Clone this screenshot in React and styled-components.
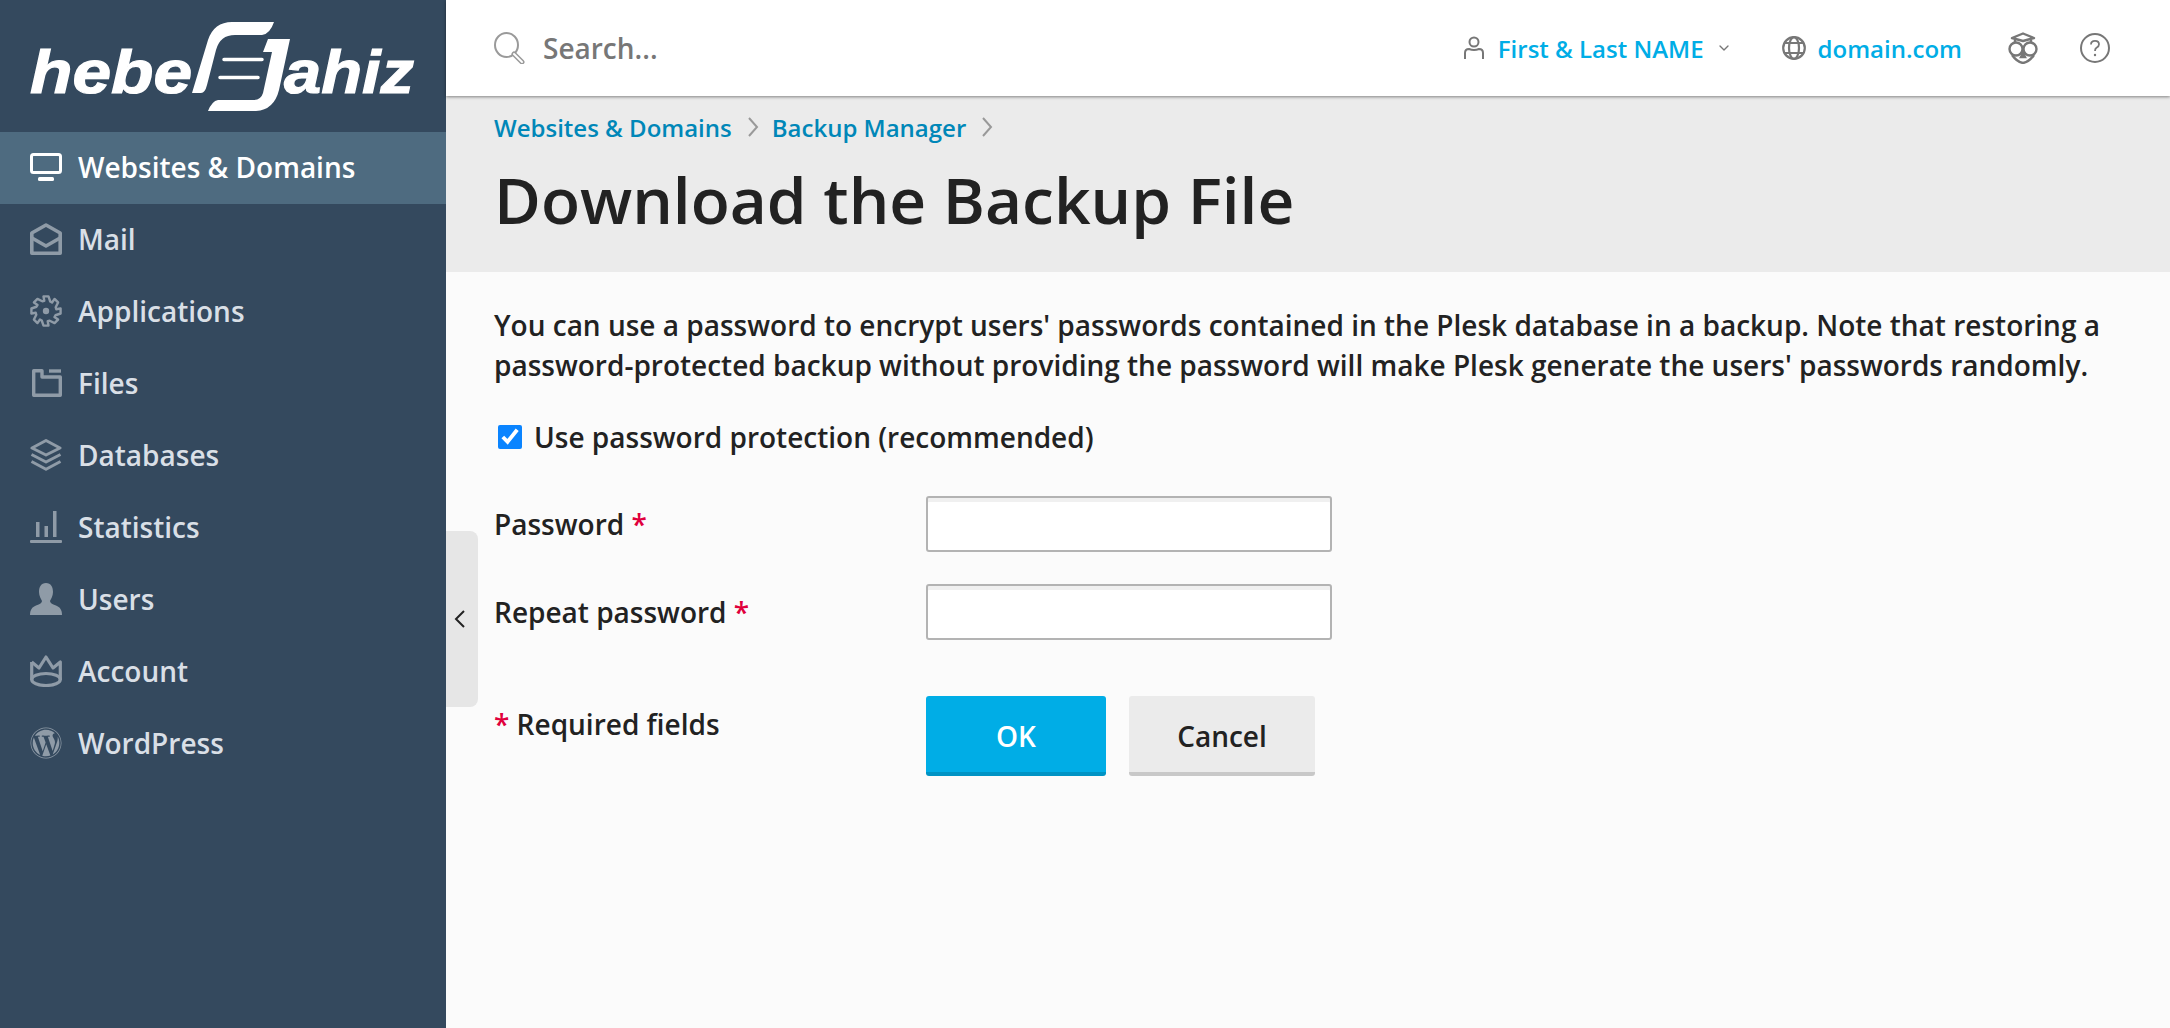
import React from 'react'
import styled, {createGlobalStyle} from 'styled-components'
import {ChevronDown} from 'lucide-react'
import {FaWordpress} from 'react-icons/fa'

const Global = createGlobalStyle`
html, body {margin:0; padding:0; height:100%;}
body {font-family:"Open Sans", "Liberation Sans", sans-serif; font-weight:600; color:#222; background:#fbfbfb;}
#root {height:100%;}
* {box-sizing:border-box;}
`

const Page = styled.div`
display:flex;
height:1028px;
overflow:hidden;
`

const Sidebar = styled.aside`
position:relative;
flex:0 0 446px;
background:#34495e;
`

const LogoBox = styled.div`
height:132px;
svg{display:block;}
`

const NavItem = styled.a`
display:flex;
align-items:center;
gap:16px;
height:72px;
padding:0 0 2px 30px;
font-size:28px;
color:${props => props.$active ? '#fff' : '#d9dfe6'};
background:${props => props.$active ? '#4e6b80' : 'transparent'};
svg{
    flex:0 0 32px;
    width:32px;
    height:32px;
    color:${props => props.$active ? '#fff' : '#8f9ba7'};
}
`

const Collapse = styled.div`
position:absolute;
left:100%;
top:531px;
width:32px;
height:176px;
display:flex;
align-items:center;
padding-left:8px;
background:#e6e6e6;
border-radius:0 8px 8px 0;
`

const Main = styled.main`
flex:1;
min-width:0;
display:flex;
flex-direction:column;
`

const TopBar = styled.header`
position:relative;
flex:0 0 96px;
display:flex;
align-items:center;
justify-content:space-between;
padding:0 60px 0 48px;
background:#fff;
box-shadow:0 1px 3px rgba(0,0,0,.45);
`

const SearchBox = styled.div`
display:flex;
align-items:center;
gap:17px;
font-size:28px;
color:#777;
`

const TopLinks = styled.div`
display:flex;
align-items:center;
`

const TopLink = styled.a`
display:flex;
align-items:center;
gap:${props => props.$gap || 12}px;
margin-right:${props => props.$after || 0}px;
font-size:24px;
color:#00ade6;
svg{flex:none; color:#777;}
`

const Caret = styled(ChevronDown)`
margin-right:50px;
color:#777;
`

const PageHead = styled.section`
flex:0 0 176px;
padding:13px 36px 0 48px;
background:#ebebeb;
`

const Crumbs = styled.nav`
display:flex;
align-items:center;
height:36px;
font-size:24px;
color:#0087b8;
svg{margin:0 13px 0 15px; flex:none;}
`

const Title = styled.h1`
margin:15px 0 0;
font-size:64px;
font-weight:600;
line-height:80px;
color:#222;
`

const Content = styled.section`
flex:1;
padding:33px 48px 0;
background:#fbfbfb;
`

const Intro = styled.p`
margin:0;
font-size:28px;
line-height:40px;
color:#222;
white-space:nowrap;
`

const CheckRow = styled.label`
display:flex;
align-items:center;
height:40px;
margin-top:32px;
font-size:28px;
input{
    width:24px;
    height:24px;
    margin:0 12px 0 4px;
    accent-color:#0a84ff;
}
`

const FormRow = styled.div`
display:grid;
grid-template-columns:432px auto;
align-items:center;
margin-top:${props => props.$top || 32}px;
font-size:28px;
`

const Star = styled.span`
color:#e0003c;
`

const TextBox = styled.input`
display:block;
width:406px;
height:56px;
padding:0 12px;
background:#fff;
border:2px solid #b3b3b3;
border-radius:3px;
box-shadow:inset 0 4px 0 #f0f0f0;
outline:none;
`

const Buttons = styled.div`
display:flex;
gap:23px;
`

const Button = styled.button`
width:${props => props.$width}px;
height:80px;
padding:4px 0 0;
border:0;
border-bottom:4px solid ${props => props.$primary ? '#0093c4' : '#c8c8c8'};
border-radius:3px;
font:600 28px "Open Sans", sans-serif;
color:${props => props.$primary ? '#fff' : '#222'};
background:${props => props.$primary ? '#00ade6' : '#ebebeb'};
`

const RequiredNote = styled.div`
align-self:start;
margin-top:9px;
`

function Logo() {
    const letters = {fontFamily: '"Liberation Sans", sans-serif', fontWeight: 700, fontStyle: 'italic', fontSize: 62, fill: '#fff', stroke: '#fff', strokeWidth: 1.2}
    return (
        <svg width="446" height="132" viewBox="0 0 446 132">
            <text x="30" y="93" textLength="162" lengthAdjust="spacingAndGlyphs" style={letters}>hebe</text>
            <text x="284" y="93" textLength="130" lengthAdjust="spacingAndGlyphs" style={letters}>ahiz</text>
            <path fill="#fff" d="M274 22 H232 Q214 22 208 40 L192 93 H201 Q205 93 207 85 L216 50 Q220 35 235 35 H262 Q270 34 274 22 Z" />
            <path fill="#fff" d="M290 39 H268 L263 52 H272 L263 93 Q261 100 253 100 H218 Q212 101 208 111 H256 Q274 110 279 90 Z" />
            <path stroke="#fff" strokeWidth="3.5" strokeLinecap="round" d="M224 59.5 H262 M220 77.5 H258" />
        </svg>
    )
}

const MonitorIcon = () => (
    <svg viewBox="0 0 32 32" fill="none" stroke="currentColor">
        <rect x="1.5" y="3.5" width="29" height="18" rx="2" strokeWidth="3" />
        <rect x="8" y="26" width="16" height="4" rx="1.5" fill="currentColor" stroke="none" />
    </svg>
)

const MailIcon = () => (
    <svg viewBox="0 0 32 32" fill="none" stroke="currentColor" strokeWidth="3.6" strokeLinejoin="round">
        <path d="M1.8 10 L16 2 L30.2 10 V30.2 H1.8 Z" />
        <path d="M2 15 L16 23 L30 15" />
    </svg>
)

// 8 teeth gear outline
const gearPoints = Array.from({length: 8}).flatMap((_, i) => {
    const a = i * Math.PI / 4
    return [-0.17, 0.17, 0.42, 0.62].map((off, j) => {
        const r = j < 2 ? 14.8 : 10.4
        return `${(16 + r * Math.sin(a + off)).toFixed(2)},${(16 - r * Math.cos(a + off)).toFixed(2)}`
    })
}).join(' ')

const GearIcon = () => (
    <svg viewBox="0 0 32 32" fill="none" stroke="currentColor" strokeWidth="2.4" strokeLinejoin="round">
        <polygon points={gearPoints} />
        <circle cx="16" cy="16" r="3.2" fill="currentColor" stroke="none" />
    </svg>
)

const FilesIcon = () => (
    <svg viewBox="0 0 32 32" fill="none" stroke="currentColor" strokeWidth="3.4">
        <path d="M3.7 3.7 H12 V10 H30.3 V28.3 H3.7 Z" strokeLinejoin="round" />
        <path d="M19 4 H31" />
    </svg>
)

const LayersIcon = () => (
    <svg viewBox="0 0 32 32" fill="none" stroke="currentColor" strokeWidth="3" strokeLinejoin="round">
        <path d="M16 1.5 L30 9 L16 16 L2 9 Z" />
        <path d="M1.5 15.5 L16 23 L30.5 15.5" />
        <path d="M1.5 22.5 L16 30.2 L30.5 22.5" />
    </svg>
)

const StatsIcon = () => (
    <svg viewBox="0 0 32 32" fill="currentColor">
        <rect x="0" y="29" width="32" height="3" rx="1" />
        <rect x="6" y="11" width="3.5" height="15" />
        <rect x="14.5" y="15" width="3.5" height="11" />
        <rect x="23" y="0" width="3.5" height="26" />
    </svg>
)

const UserIcon = () => (
    <svg viewBox="0 0 32 32" fill="currentColor">
        <path d="M16 0 C21 0 23 4 23 9 C23 13 21 16 20 18 C20 20 22 21 26 22.5 C30 24 32 27 32 32 H0 C0 27 2 24 6 22.5 C10 21 12 20 12 18 C11 16 9 13 9 9 C9 4 11 0 16 0 Z" />
    </svg>
)

const CrownIcon = () => (
    <svg viewBox="0 0 32 32" fill="none" stroke="currentColor" strokeWidth="3.2" strokeLinejoin="round">
        <path d="M1.7 7 L9 13 L16 2 L23 13 L30.3 7 V25" />
        <path d="M1.7 7 V25" />
        <ellipse cx="16" cy="24.5" rx="14.3" ry="6" />
    </svg>
)

const SearchIcon = () => (
    <svg width="32" height="32" viewBox="0 0 32 32" fill="none" stroke="#9a9a9a">
        <ellipse cx="12.5" cy="13" rx="11.5" ry="12" strokeWidth="2" />
        <path d="M20 22 L28 30" strokeWidth="5" strokeLinecap="round" />
        <path d="M20 22 L28 30" strokeWidth="2" stroke="#fff" strokeLinecap="round" />
    </svg>
)

const AccountIcon = () => (
    <svg width="20" height="24" viewBox="0 0 20 24" fill="none" stroke="currentColor" strokeWidth="2">
        <circle cx="10" cy="6" r="4.5" />
        <path d="M1 23 V17 Q1 13 5 13 Q10 15 15 13 Q19 13 19 17 V23" />
    </svg>
)

const GlobeIcon = () => (
    <svg width="24" height="24" viewBox="0 0 24 24" fill="none" stroke="currentColor" strokeWidth="2.2">
        <circle cx="12" cy="12" r="10.8" />
        <ellipse cx="12" cy="12" rx="5" ry="10.8" />
        <path d="M3 7 H21 M3 17 H21" />
    </svg>
)

const OwlIcon = () => (
    <svg width="30" height="32" viewBox="0 0 30 32" fill="none" stroke="currentColor" strokeWidth="2.4">
        <path d="M4 6 L15 1.5 L26 6 L15 9 Z" strokeLinejoin="round" />
        <circle cx="8" cy="17" r="6.5" />
        <circle cx="22" cy="17" r="6.5" />
        <path d="M4 23 Q9 30 15 31 Q21 30 26 23 M15 21 L13 25 H17 Z M7 8 V10 M23 8 V10" />
    </svg>
)

const HelpIcon = () => (
    <svg width="30" height="30" viewBox="0 0 30 30" fill="none" stroke="currentColor" strokeWidth="2">
        <circle cx="15" cy="15" r="14" />
        <path d="M11 11.5 Q11 7.8 15 7.8 Q19 7.8 19 11.2 Q19 13.4 16.5 14.8 Q15 15.8 15 18" strokeWidth="1.8" />
        <circle cx="15" cy="22" r="1.2" fill="currentColor" stroke="none" />
    </svg>
)

const CrumbArrow = () => (
    <svg width="12" height="20" viewBox="0 0 12 20" fill="none" stroke="#999" strokeWidth="2">
        <path d="M2 1 L10 10 L2 19" />
    </svg>
)

const navItems = [
    {label: 'Websites & Domains', icon: <MonitorIcon />, active: true},
    {label: 'Mail', icon: <MailIcon />},
    {label: 'Applications', icon: <GearIcon />},
    {label: 'Files', icon: <FilesIcon />},
    {label: 'Databases', icon: <LayersIcon />},
    {label: 'Statistics', icon: <StatsIcon />},
    {label: 'Users', icon: <UserIcon />},
    {label: 'Account', icon: <CrownIcon />},
    {label: 'WordPress', icon: <FaWordpress />},
]

export default function App() {
    return (
        <Page>
            <Global />
            <Sidebar>
                <LogoBox><Logo /></LogoBox>
                {navItems.map(item => (
                    <NavItem key={item.label} $active={item.active}>
                        {item.icon}
                        {item.label}
                    </NavItem>
                ))}
                <Collapse>
                    <svg width="11" height="18" viewBox="0 0 11 18" fill="none" stroke="#222" strokeWidth="2">
                        <path d="M10 1 L2 9 L10 17" />
                    </svg>
                </Collapse>
            </Sidebar>
            <Main>
                <TopBar>
                    <SearchBox><SearchIcon />Search...</SearchBox>
                    <TopLinks>
                        <TopLink $gap={14} $after={12}><AccountIcon />First &amp; Last NAME</TopLink>
                        <Caret size={16} />
                        <TopLink $after={46}><GlobeIcon />domain.com</TopLink>
                        <TopLink $after={42}><OwlIcon /></TopLink>
                        <TopLink><HelpIcon /></TopLink>
                    </TopLinks>
                </TopBar>
                <PageHead>
                    <Crumbs>
                        Websites &amp; Domains<CrumbArrow />Backup Manager<CrumbArrow />
                    </Crumbs>
                    <Title>Download the Backup File</Title>
                </PageHead>
                <Content>
                    <Intro>
                        You can use a password to encrypt users' passwords contained in the Plesk database in a backup. Note that restoring a<br />
                        password-protected backup without providing the password will make Plesk generate the users' passwords randomly.
                    </Intro>
                    <CheckRow>
                        <input type="checkbox" defaultChecked />
                        Use password protection (recommended)
                    </CheckRow>
                    <FormRow $top={39}>
                        <div>Password <Star>*</Star></div>
                        <TextBox type="password" />
                    </FormRow>
                    <FormRow>
                        <div>Repeat password <Star>*</Star></div>
                        <TextBox type="password" />
                    </FormRow>
                    <FormRow $top={56}>
                        <RequiredNote><Star>*</Star> Required fields</RequiredNote>
                        <Buttons>
                            <Button $primary $width={180}>OK</Button>
                            <Button $width={186}>Cancel</Button>
                        </Buttons>
                    </FormRow>
                </Content>
            </Main>
        </Page>
    )
}
